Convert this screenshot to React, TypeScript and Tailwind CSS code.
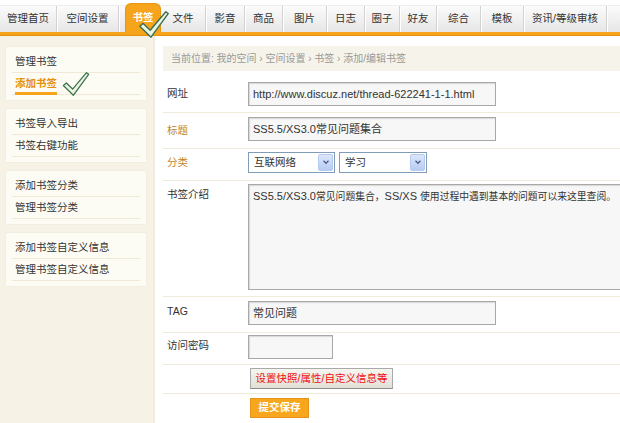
const tabs = [
  { label: "管理首页", w: "w-[57px]" },
  { label: "空间设置", w: "w-[62px]" },
  { label: "书签", w: "w-[36px]", active: true },
  { label: "文件", w: "w-[45px]" },
  { label: "影音", w: "w-[39px]" },
  { label: "商品", w: "w-[38px]" },
  { label: "图片", w: "w-[44px]" },
  { label: "日志", w: "w-[38px]" },
  { label: "圈子", w: "w-[35px]" },
  { label: "好友", w: "w-[37px]" },
  { label: "综合", w: "w-[44px]" },
  { label: "模板", w: "w-[43px]" },
  { label: "资讯/等级审核", w: "w-[83px]" },
];

const menuGroups = [
  [{ label: "管理书签" }, { label: "添加书签", active: true }],
  [{ label: "书签导入导出" }, { label: "书签右键功能" }],
  [{ label: "添加书签分类" }, { label: "管理书签分类" }],
  [{ label: "添加书签自定义信息" }, { label: "管理书签自定义信息" }],
];

function Check({ className }: { className: string }) {
  return (
    <svg viewBox="0 0 30 27" className={className}>
      <path
        d="M0.8 15.2 L4.2 12.4 L11.2 19.2 L26.8 0.8 L29.2 2.6 L12 26.2 Z"
        fill="#eaf6e0"
        stroke="#3d6f50"
        strokeWidth="1.4"
        strokeLinejoin="round"
      />
    </svg>
  );
}

function Select({ value, w }: { value: string; w: string }) {
  return (
    <div className={`flex h-[21px] ${w} items-center justify-between border border-[#7f9db9] bg-white pl-[5px] pr-[1px]`}>
      <span>{value}</span>
      <span className="flex h-[17px] w-[15px] items-center justify-center rounded-[2px] border border-[#b6c9ef] bg-gradient-to-b from-[#dde7fb] to-[#b7cbf4]">
        <svg viewBox="0 0 8 6" className="h-[5px] w-[8px]">
          <path d="M1 1 L4 4 L7 1" fill="none" stroke="#4d6185" strokeWidth="1.6" />
        </svg>
      </span>
    </div>
  );
}

const inputCls =
  "h-[24px] border border-[#a8a8a8] bg-[#f7f7f7] px-[4px] leading-[22px] shadow-[inset_1px_1px_1px_#d8d8d8]";

export default function App() {
  return (
    <div
      className="h-[423px] w-[620px] overflow-hidden bg-white text-[10.5px] text-[#333]"
      style={{ fontFamily: '"Liberation Sans", "Noto Sans CJK SC", sans-serif' }}
    >
      {/* top nav */}
      <div className="relative">
        <div className="flex h-[32px] items-end bg-white">
          <div className="flex h-[27px] flex-1 items-stretch border-t border-[#eeeeee] bg-gradient-to-b from-[#fbfbfb] to-[#e6e6e6]">
            {tabs.map((t) =>
              t.active ? (
                <div
                  key={t.label}
                  className={`${t.w} ml-[6px] -mt-[3px] flex items-center justify-center rounded-t-[6px] border border-b-0 border-[#e8960f] bg-[#f6a41b] font-bold text-white`}
                >
                  {t.label}
                </div>
              ) : (
                <div
                  key={t.label}
                  className={`${t.w} flex items-center justify-center border-r border-[#d2d2d2] shadow-[1px_0_0_#ffffff]`}
                >
                  {t.label}
                </div>
              )
            )}
          </div>
        </div>
        <div className="h-[4px] border-b border-[#e3920c] bg-[#f6a41b]" />
        <Check className="absolute left-[139px] top-[11px] h-[27px] w-[30px]" />
      </div>

      <div className="flex">
        {/* sidebar */}
        <aside className="flex h-[387px] w-[155px] shrink-0 flex-col gap-[9px] border-r-2 border-[#f0ecdc] bg-[#f6f3e6] px-[6px] pt-[11px]">
          {menuGroups.map((group, gi) => (
            <div
              key={gi}
              className="w-[140px] bg-[#fdfcf4] px-[6px] pb-[5px] pt-[4px] shadow-[0_0_1px_#e2dcc4]"
            >
              {group.map((item) => (
                <div key={item.label} className="relative flex h-[22px] items-center border-b border-[#efe9d6] pl-[3px]">
                  {item.active ? (
                    <>
                      <span className="border-b-[3px] border-[#f6a41b] pt-[2px] font-bold leading-[17px] text-[#e8900a]">
                        {item.label}
                      </span>
                      <Check className="absolute left-[50px] top-[-1px] h-[24px] w-[28px]" />
                    </>
                  ) : (
                    <span>{item.label}</span>
                  )}
                </div>
              ))}
            </div>
          ))}
        </aside>

        {/* main */}
        <main className="min-w-0 flex-1 pl-[8px] pt-[10px]">
          <div className="flex h-[25px] items-center bg-[#f6f4ea] pl-[8px] text-[10px] text-[#999]">
            当前位置: 我的空间 › 空间设置 › 书签 › 添加/编辑书签
          </div>

          <div className="flex h-[42px] border-b border-[#f1ecd9] pt-[11px]">
            <div className="w-[85px] shrink-0 pl-[4px] pt-[4px]">网址</div>
            <div className={`${inputCls} w-[248px] text-[11px]`}>http://www.discuz.net/thread-622241-1-1.html</div>
          </div>

          <div className="flex h-[36px] border-b border-[#f1ecd9] pt-[4px]">
            <div className="w-[85px] shrink-0 pl-[4px] pt-[6px] text-[#c0862a]">标题</div>
            <div className={`${inputCls} w-[248px] text-[11px]`}>SS5.5/XS3.0常见问题集合</div>
          </div>

          <div className="flex h-[32px] border-b border-[#f1ecd9] pt-[3px]">
            <div className="w-[85px] shrink-0 pl-[4px] pt-[3px] text-[#c0862a]">分类</div>
            <div className="flex gap-[4px]">
              <Select value="互联网络" w="w-[87px]" />
              <Select value="学习" w="w-[88px]" />
            </div>
          </div>

          <div className="flex h-[116px] border-b border-[#f1ecd9] pt-[3px]">
            <div className="w-[85px] shrink-0 pl-[4px] pt-[3px]">书签介绍</div>
            <div className="h-[106px] w-[376px] shrink-0 whitespace-nowrap border border-[#a8a8a8] bg-[#f7f7f7] px-[4px] pt-[3px] text-[11px] shadow-[inset_1px_1px_1px_#d8d8d8]">
              SS5.5/XS3.0<span className="text-[9.8px]">常见问题集合，</span>SS/XS{" "}
              <span className="text-[9.8px]">使用过程中遇到基本的问题可以来这里查阅。</span>
            </div>
          </div>

          <div className="flex h-[36px] border-b border-[#f1ecd9] pt-[4px]">
            <div className="w-[85px] shrink-0 pl-[4px] pt-[3px]">TAG</div>
            <div className={`${inputCls} w-[248px] text-[11px]`}>常见问题</div>
          </div>

          <div className="flex h-[32px] border-b border-[#f1ecd9] pt-[2px]">
            <div className="w-[85px] shrink-0 pl-[4px] pt-[3px]">访问密码</div>
            <div className={`${inputCls} w-[85px]`} />
          </div>

          <div className="flex h-[29px] border-b border-[#f1ecd9] pl-[87px] pt-[3px]">
            <button className="h-[21px] w-[143px] border border-[#a9a9a9] border-b-[#8c8c8c] bg-gradient-to-b from-[#f6f5ef] to-[#e2e0d6] text-[10.5px] text-[#f01010]">
              设置快照/属性/自定义信息等
            </button>
          </div>

          <div className="flex pl-[87px] pt-[4px]">
            <button className="h-[20px] w-[59px] border border-[#e6951a] bg-[#f7a61d] text-[10.5px] font-bold text-white">
              提交保存
            </button>
          </div>
        </main>
      </div>
    </div>
  );
}
